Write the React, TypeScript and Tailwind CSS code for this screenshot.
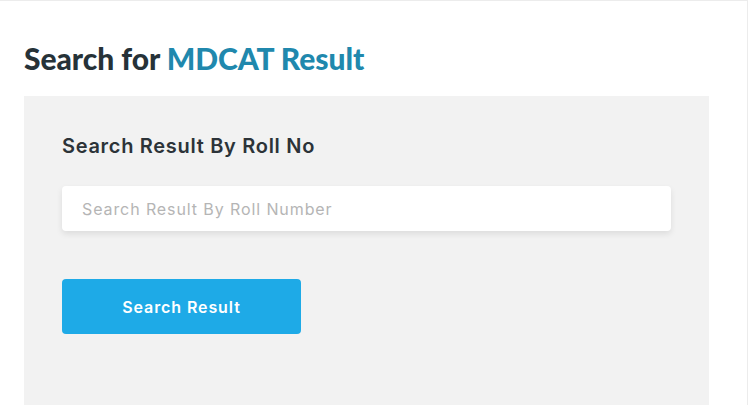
export default function App() {
  return (
    <div className="w-[750px] h-[405px] overflow-hidden bg-white">
      <div className="h-full w-[748px] border-t border-r border-[#ececec] bg-white pl-6 pt-[37px]">
        <h1 className="text-[30px] leading-[40px] font-black text-[#263238] tracking-[-0.05px] font-['Lato',sans-serif]">
          Search for <span className="text-[#2088ad]">MDCAT Result</span>
        </h1>
        <div className="mt-[18px] w-[685px] h-[320px] bg-[#f2f2f2] pl-[38px] pt-[36px] pr-[38px]">
          <h2 className="text-[20px] leading-[28px] font-semibold text-[#2c3338] tracking-[0.7px] font-['Inter',sans-serif]">
            Search Result By Roll No
          </h2>
          <input
            placeholder="Search Result By Roll Number"
            className="mt-[26px] w-[609px] h-[45px] rounded bg-white px-5 text-[16px] tracking-[0.9px] text-gray-700 placeholder:text-[#b5b5b5] shadow-[0_3px_6px_rgba(0,0,0,0.09)] outline-none font-['Inter',sans-serif]"
          />
          <button className="mt-[48px] block w-[239px] h-[55px] rounded bg-[#1eaae7] text-white text-[16px] font-semibold tracking-[0.9px] font-['Inter',sans-serif]">
            Search Result
          </button>
        </div>
      </div>
    </div>
  );
}
